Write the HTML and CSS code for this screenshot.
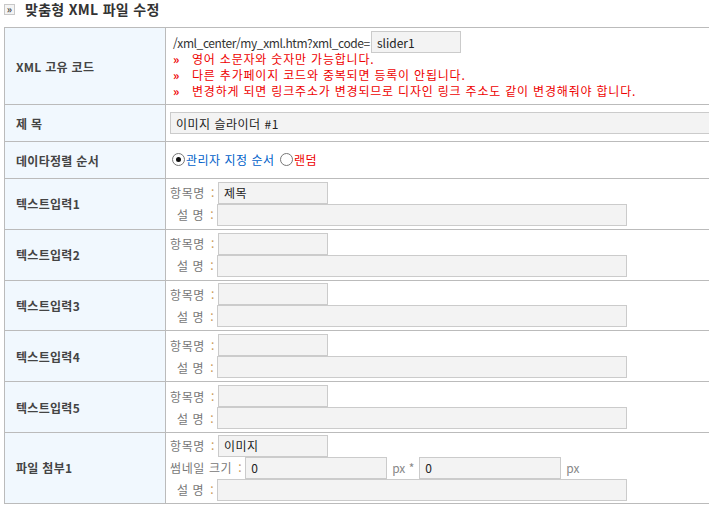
FILE: index.html
```html
<!DOCTYPE html>
<html lang="ko">
<head>
<meta charset="utf-8">
<link rel="stylesheet" href="styles.css">
</head>
<body>
<div class="head">
  <span class="head-icon">&raquo;</span>
  <span class="head-title">맞춤형 XML 파일 수정</span>
</div>
<table class="form">
  <tr class="r-code">
    <th>XML 고유 코드</th>
    <td>
      <div class="code-line"><span class="url">/xml_center/my_xml.htm?xml_code=</span><input class="inp inp-code" value="slider1"></div>
      <div class="note first"><span class="bullet">&raquo;</span>영어 소문자와 숫자만 가능합니다.</div>
      <div class="note"><span class="bullet">&raquo;</span>다른 추가페이지 코드와 중복되면 등록이 안됩니다.</div>
      <div class="note"><span class="bullet">&raquo;</span>변경하게 되면 링크주소가 변경되므로 디자인 링크 주소도 같이 변경해줘야 합니다.</div>
    </td>
  </tr>
  <tr class="r-one">
    <th>제 목</th>
    <td><input class="inp inp-title" value="이미지 슬라이더 #1"></td>
  </tr>
  <tr class="r-one">
    <th>데이타정렬 순서</th>
    <td>
      <label class="radio"><span class="rb on"></span><span class="blue">관리자 지정 순서</span></label>
      <label class="radio second"><span class="rb"></span><span class="red">랜덤</span></label>
    </td>
  </tr>
  <tr class="r-text">
    <th>텍스트입력1</th>
    <td>
      <div class="fl"><span class="lbl">항목명<b>:</b></span><input class="inp inp-name" value="제목"></div>
      <div class="fl"><span class="lbl lbl-desc">설 명<b>:</b></span><input class="inp inp-desc" value=""></div>
    </td>
  </tr>
  <tr class="r-text">
    <th>텍스트입력2</th>
    <td>
      <div class="fl"><span class="lbl">항목명<b>:</b></span><input class="inp inp-name" value=""></div>
      <div class="fl"><span class="lbl lbl-desc">설 명<b>:</b></span><input class="inp inp-desc" value=""></div>
    </td>
  </tr>
  <tr class="r-text">
    <th>텍스트입력3</th>
    <td>
      <div class="fl"><span class="lbl">항목명<b>:</b></span><input class="inp inp-name" value=""></div>
      <div class="fl"><span class="lbl lbl-desc">설 명<b>:</b></span><input class="inp inp-desc" value=""></div>
    </td>
  </tr>
  <tr class="r-text">
    <th>텍스트입력4</th>
    <td>
      <div class="fl"><span class="lbl">항목명<b>:</b></span><input class="inp inp-name" value=""></div>
      <div class="fl"><span class="lbl lbl-desc">설 명<b>:</b></span><input class="inp inp-desc" value=""></div>
    </td>
  </tr>
  <tr class="r-text">
    <th>텍스트입력5</th>
    <td>
      <div class="fl"><span class="lbl">항목명<b>:</b></span><input class="inp inp-name" value=""></div>
      <div class="fl"><span class="lbl lbl-desc">설 명<b>:</b></span><input class="inp inp-desc" value=""></div>
    </td>
  </tr>
  <tr class="r-file">
    <th>파일 첨부1</th>
    <td>
      <div class="fl"><span class="lbl">항목명<b>:</b></span><input class="inp inp-name" value="이미지"></div>
      <div class="fl"><span class="lbl">썸네일 크기<b>:</b></span><input class="inp inp-size" value="0"><span class="px">px *</span><input class="inp inp-size" value="0"><span class="px">px</span></div>
      <div class="fl"><span class="lbl lbl-desc">설 명<b>:</b></span><input class="inp inp-desc" value=""></div>
    </td>
  </tr>
</table>
</body>
</html>
```
FILE: styles.css
```css
html, body {
  margin: 0;
  background: #fff;
  overflow: hidden;
}
body {
  padding: 3px 0 0 4px;
  font-family: "Noto Sans CJK KR", "DejaVu Sans", sans-serif;
  font-size: 12px;
  color: #444;
}
.head {
  display: flex;
  align-items: center;
  height: 12px;
  margin-bottom: 12px;
}
.head-icon {
  box-sizing: border-box;
  width: 11px;
  height: 11px;
  border: 1px solid #c8c8c8;
  background: #f4f4f4;
  font-size: 10px;
  line-height: 8px;
  text-align: center;
  color: #444;
  font-weight: bold;
}
.head-title {
  margin-left: 10px;
  font-size: 14px;
  font-weight: bold;
  color: #333;
  letter-spacing: 0.3px;
}
.form {
  border-collapse: collapse;
  width: 740px;
  table-layout: fixed;
}
.form th, .form td {
  border: 1px solid #bbb;
  padding: 0;
  vertical-align: middle;
}
.form th {
  width: 149px;
  background: #f1f8fe;
  text-align: left;
  padding-left: 11px;
  font-weight: bold;
  color: #444;
  font-size: 12px;
  letter-spacing: 0.3px;
}
.form td {
  padding-left: 4px;
}
.r-code th, .r-code td { height: 76px; }
.r-code td { vertical-align: top; padding-top: 3px; height: 73px; }
.r-one th, .r-one td { height: 36px; }
.r-text th, .r-text td { height: 49.8px; }
.r-file th, .r-file td { height: 70px; }

.code-line {
  display: flex;
  align-items: center;
  height: 22px;
  color: #333;
  padding-left: 3px;
}
.url { letter-spacing: -0.4px; }
.note {
  color: #e00;
  height: 16px;
  line-height: 16px;
  padding-left: 3px;
  letter-spacing: 0.8px;
}
.note.first { margin-top: -2px; }
.bullet {
  display: inline-block;
  width: 19px;
  font-weight: bold;
  letter-spacing: 0;
}
.inp {
  box-sizing: border-box;
  height: 22px;
  border: 1px solid #cbcbcb;
  background: #f3f3f3;
  font-family: "Noto Sans CJK KR", "DejaVu Sans", sans-serif;
  font-size: 12px;
  color: #222;
  padding: 0 5px;
  margin: 0;
  outline: none;
  letter-spacing: 0.5px;
}
.inp-code { width: 90px; margin-left: 1px; letter-spacing: 0; }
.inp-title { width: 560px; }
.inp-name { width: 110px; }
.inp-desc { width: 410px; }
.inp-size { width: 142px; }

.radio {
  display: inline-flex;
  align-items: center;
  margin-left: 2px;
  letter-spacing: 0.5px;
}
.radio.second { margin-left: 2px; }
.rb {
  box-sizing: border-box;
  width: 13px;
  height: 13px;
  border: 1px solid #777;
  border-radius: 50%;
  background: #fff;
  margin-right: 1px;
  position: relative;
}
.rb.on::after {
  content: "";
  position: absolute;
  left: 3px;
  top: 3px;
  width: 5px;
  height: 5px;
  border-radius: 50%;
  background: #111;
}
.blue { color: #0061c9; }
.red { color: #e00; }

.fl {
  display: flex;
  align-items: center;
  height: 22px;
}
.lbl {
  color: #777;
  letter-spacing: 0.6px;
}
.lbl b {
  color: #c99a5a;
  font-weight: normal;
  margin-left: 6px;
  margin-right: 3px;
}
.lbl-desc {
  padding-left: 7px;
}
.px {
  color: #888;
  padding: 0 5px;
}
```
